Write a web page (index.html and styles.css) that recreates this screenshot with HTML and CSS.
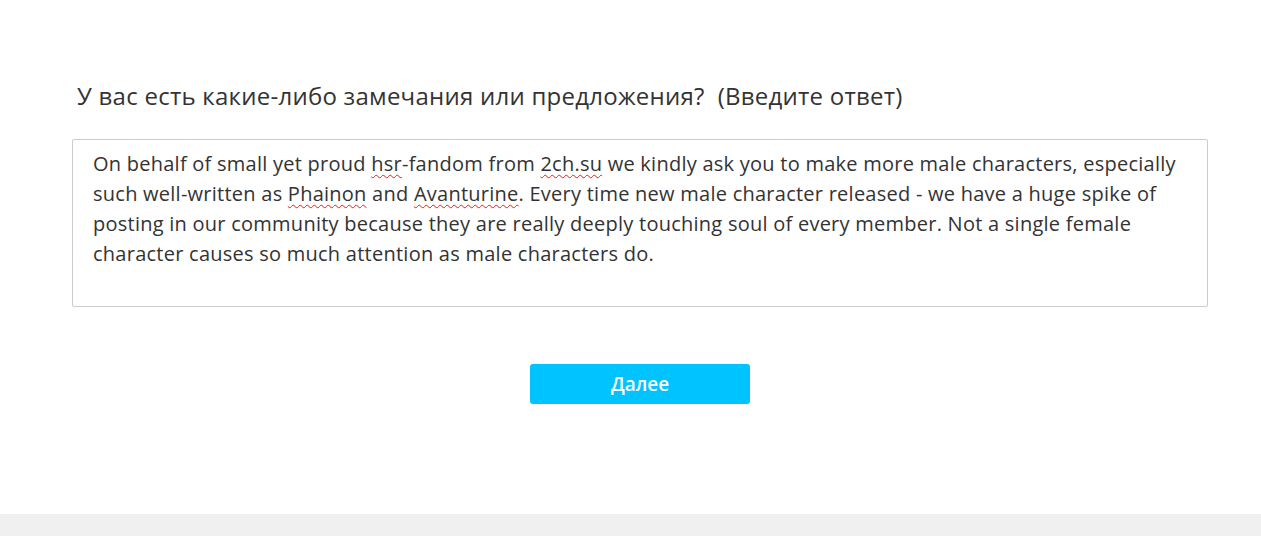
FILE: index.html
```html
<!DOCTYPE html>
<html lang="ru">
<head>
<meta charset="utf-8">
<title>Опрос</title>
<link rel="stylesheet" href="styles.css">
</head>
<body>
<main class="page">
  <section class="question">
    <h2 class="question-title">У вас есть какие-либо замечания или предложения?&nbsp; (Введите ответ)</h2>
    <div class="answer">On behalf of small yet proud <span class="typo">hsr</span>-fandom from <span class="typo">2ch.su</span> we kindly ask you to make more male characters, especially<br>such well-written as <span class="typo">Phainon</span> and <span class="typo">Avanturine</span>. Every time new male character released - we have a huge spike of<br>posting in our community because they are really deeply touching soul of every member. Not a single female<br>character causes so much attention as male characters do.</div>
  </section>
  <div class="actions">
    <button class="next-btn" type="button">Далее</button>
  </div>
</main>
<footer class="footer"></footer>
</body>
</html>
```
FILE: styles.css
```css
html, body {
  margin: 0;
  padding: 0;
  background: #ffffff;
}
body {
  font-family: "Open Sans", "Noto Sans", sans-serif;
  color: #333333;
  height: 536px;
  display: flex;
  flex-direction: column;
}
.page {
  flex: 1;
  padding: 79px 0 0 72px;
}
.question {
  width: 1136px;
}
.question-title {
  margin: 0 0 26px 5px;
  font-size: 24px;
  letter-spacing: 0.25px;
  font-weight: 400;
  line-height: 34px;
  color: #333333;
}
.answer {
  box-sizing: border-box;
  height: 168px;
  border: 1px solid #cccccc;
  border-radius: 2px;
  padding: 9px 20px 7px;
  font-size: 20px;
  letter-spacing: 0.25px;
  line-height: 30px;
  color: #333333;
  white-space: nowrap;
}
.typo {
  text-decoration: underline wavy #e02020;
  text-decoration-thickness: 1px;
  text-underline-offset: 3px;
}
.actions {
  display: flex;
  justify-content: center;
  width: 1136px;
  padding-top: 57px;
}
.next-btn {
  width: 220px;
  height: 40px;
  border: none;
  border-radius: 3px;
  background: #00c3ff;
  color: #ffffff;
  font-family: "Open Sans", "Noto Sans", sans-serif;
  font-size: 19px;
  font-weight: 600;
  cursor: pointer;
}
.footer {
  height: 22px;
  background: #f0f0f0;
}
```
